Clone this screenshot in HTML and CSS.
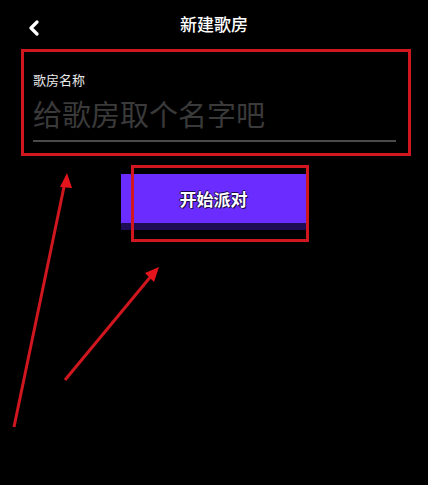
FILE: index.html
```html
<!DOCTYPE html>
<html lang="zh-CN">
<head>
  <meta charset="UTF-8" />
  <meta name="viewport" content="width=device-width, initial-scale=1.0"/>
  <title>新建歌房</title>
  <link rel="stylesheet" href="styles.css">
</head>
<body>
  <div class="page">
    <div class="topbar">
      <span class="back">
        <svg width="14" height="16" viewBox="0 0 14 16"><path d="M10 2 L4 8 L10 14" fill="none" stroke="#fff" stroke-width="3.2" stroke-linecap="round" stroke-linejoin="round"/></svg>
      </span>
      <h1 class="title">新建歌房</h1>
    </div>

    <div class="field">
      <div class="field-label">歌房名称</div>
      <input class="field-input" type="text" placeholder="给歌房取个名字吧">
    </div>

    <div class="actions">
      <button class="start-btn">开始派对</button>
    </div>

    <svg class="notes" width="428" height="485" viewBox="0 0 428 485">
      <rect x="132.5" y="166.5" width="175" height="74" fill="none" stroke="#d0161e" stroke-width="3"/>
      <line x1="14" y1="427" x2="65" y2="182" stroke="#d0161e" stroke-width="3"/>
      <polygon points="67,173 60,187 72,188" fill="#e3141c"/>
      <line x1="65" y1="380" x2="152" y2="275" stroke="#d0161e" stroke-width="3"/>
      <polygon points="159,267 145,273 154,282" fill="#e3141c"/>
    </svg>
  </div>
</body>
</html>
```

FILE: styles.css
```css
body {
  margin: 0;
  background: #000;
  color: #fff;
  font-family: "Noto Sans CJK SC", "Noto Sans", sans-serif;
}
.page {
  position: relative;
  width: 428px;
  height: 485px;
  overflow: hidden;
}
.topbar {
  height: 49px;
  display: flex;
  align-items: center;
  justify-content: center;
  position: relative;
}
.back {
  position: absolute;
  left: 27px;
  top: 17px;
}
.title {
  margin: 0;
  font-size: 17px;
  font-weight: 500;
  line-height: 1;
  padding-bottom: 2px;
}
.field {
  box-sizing: border-box;
  margin-left: 21px;
  width: 390px;
  height: 107px;
  border: 3px solid #d0161e;
  padding: 20px 12px 0 9px;
}
.field-label {
  font-size: 13px;
  line-height: 16px;
  color: #e8e8e8;
}
.field-input {
  display: block;
  width: 363px;
  margin-top: 6px;
  padding: 0 0 8px;
  background: transparent;
  border: none;
  border-bottom: 2px solid #4a4a4a;
  font-family: inherit;
  font-size: 29px;
  line-height: 38px;
  color: #fff;
  outline: none;
}
.field-input::placeholder {
  color: #3a3a3a;
}
.actions {
  display: flex;
  justify-content: center;
  padding-top: 18px;
  padding-right: 1px;
}
.start-btn {
  width: 185px;
  height: 56px;
  border: none;
  background: #6a2cff;
  box-shadow: inset 0 -7px 0 #1e0d55;
  padding: 0 0 7px;
  font-family: inherit;
  font-size: 17px;
  font-weight: 700;
  color: #fff;
  text-shadow: 1px 1px 0 #1a0848, -1px 0 0 #1a0848, 0 -1px 0 #1a0848;
  cursor: pointer;
}
.notes {
  position: absolute;
  left: 0;
  top: 0;
  pointer-events: none;
}
```
